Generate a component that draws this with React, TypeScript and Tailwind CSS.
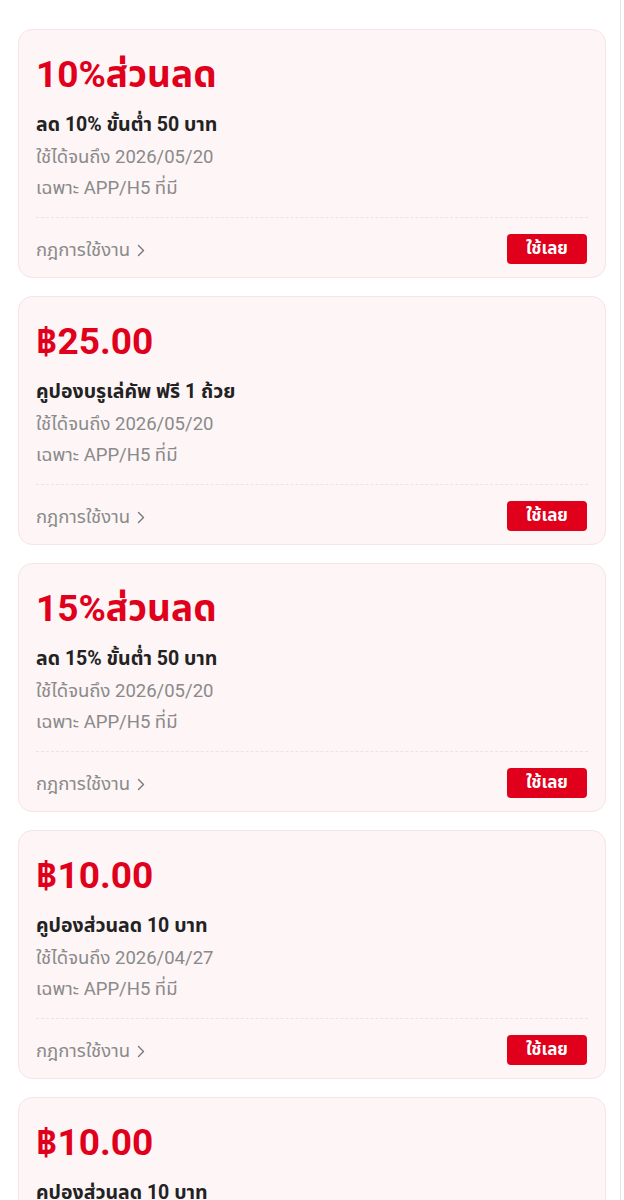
import React from "react";

type Coupon = { title: string; desc: string; date: string };

const coupons: Coupon[] = [
  { title: "10%ส่วนลด", desc: "ลด 10% ขั้นต่ำ 50 บาท", date: "2026/05/20" },
  { title: "฿25.00", desc: "คูปองบรูเล่คัพ ฟรี 1 ถ้วย", date: "2026/05/20" },
  { title: "15%ส่วนลด", desc: "ลด 15% ขั้นต่ำ 50 บาท", date: "2026/05/20" },
  { title: "฿10.00", desc: "คูปองส่วนลด 10 บาท", date: "2026/04/27" },
  { title: "฿10.00", desc: "คูปองส่วนลด 10 บาท", date: "2026/04/27" },
];

function Card({ c }: { c: Coupon }) {
  return (
    <div className="h-[249px] shrink-0 rounded-[14px] border border-[#f8e3e6] bg-[#fdf5f6] px-[17px] pt-[19px]">
      <div className="text-[37px] font-bold leading-[52px] text-[#e0001b]">{c.title}</div>
      <div className="mt-[9px] text-[19.5px] font-bold leading-[30px] text-[#222]">{c.desc}</div>
      <div className="mt-[2px] text-[18.5px] leading-[31px] text-[#8a8a8a]">ใช้ได้จนถึง {c.date}</div>
      <div className="text-[18.5px] leading-[31px] text-[#8a8a8a]">เฉพาะ APP/H5 ที่มี</div>
      <div className="mt-[13px] border-t border-dashed border-[#ede3e4]" />
      <div className="mt-[15px] flex items-start justify-between">
        <div className="flex items-center gap-[7px] pt-[3px] text-[18.5px] leading-[28px] text-[#8a8a8a]">
          <span>กฎการใช้งาน</span>
          <svg width="8" height="13" viewBox="0 0 8 13" fill="none">
            <path d="M1.5 1.5L6.5 6.5L1.5 11.5" stroke="#777" strokeWidth="1.4" strokeLinecap="round" strokeLinejoin="round" />
          </svg>
        </div>
        <button className="mr-[1px] mt-[1px] h-[30px] w-[80px] rounded-[4px] bg-[#e0001b] text-[17px] font-bold text-white">ใช้เลย</button>
      </div>
    </div>
  );
}

export default function App() {
  return (
    <div
      className="h-[1200px] w-[621px] overflow-hidden border-r border-[#e6e6e6] bg-white"
      style={{ fontFamily: 'Roboto, "Noto Sans", "Noto Sans Thai", sans-serif' }}
    >
      <div className="flex flex-col gap-[18px] pl-[18px] pr-[14px] pt-[29px]">
        {coupons.map((c, i) => (
          <Card key={i} c={c} />
        ))}
      </div>
    </div>
  );
}
